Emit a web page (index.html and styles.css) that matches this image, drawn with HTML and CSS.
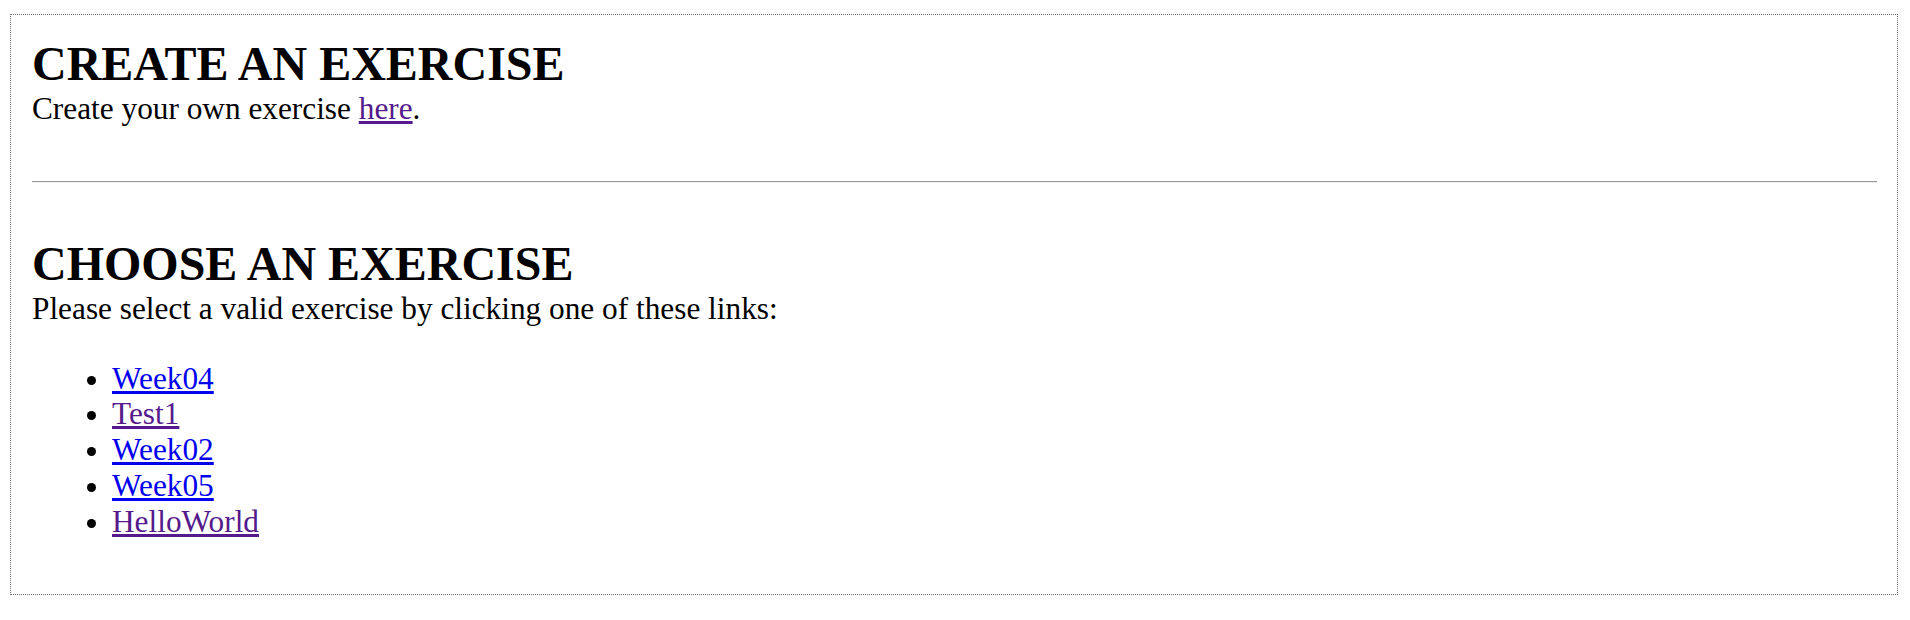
FILE: index.html
```html
<!DOCTYPE html>
<html>
<head>
<meta charset="utf-8">
<title>Exercises</title>
<link rel="stylesheet" href="styles.css">
</head>
<body>
<div class="frame">
  <section class="create">
    <h1 class="title">CREATE AN EXERCISE</h1>
    <p class="text">Create your own exercise <a class="link visited" href="#create">here</a>.</p>
  </section>
  <hr class="rule">
  <section class="choose">
    <h1 class="title">CHOOSE AN EXERCISE</h1>
    <p class="text">Please select a valid exercise by clicking one of these links:</p>
    <ul class="list">
      <li><a class="link" href="#week04">Week04</a></li>
      <li><a class="link visited" href="#test1">Test1</a></li>
      <li><a class="link" href="#week02">Week02</a></li>
      <li><a class="link" href="#week05">Week05</a></li>
      <li><a class="link visited" href="#helloworld">HelloWorld</a></li>
    </ul>
  </section>
</div>
</body>
</html>
```

FILE: styles.css
```css
html, body {
  margin: 0;
  padding: 0;
  background: #fff;
}

body {
  padding: 14px 12px 0 10px;
  font-family: "Liberation Serif", "Times New Roman", serif;
  font-size: 31.3px;
  line-height: 35.8px;
  color: #000;
}

.frame {
  border: 1px dotted #707070;
  padding: 22px 20px 23px 21px;
}

.title {
  margin: 0;
  font-size: 48px;
  font-weight: bold;
  line-height: 54px;
}

.text {
  margin: 0;
}

.rule {
  margin: 54px 0 54px;
  border: 0;
  border-top: 1px solid #999;
  border-bottom: 1px solid #eee;
  height: 0;
}

.list {
  margin: 34px 0 31px;
  padding-left: 80px;
}

.link {
  color: #0000ee;
  text-decoration: underline;
}

.link.visited {
  color: #551a8b;
}
```
